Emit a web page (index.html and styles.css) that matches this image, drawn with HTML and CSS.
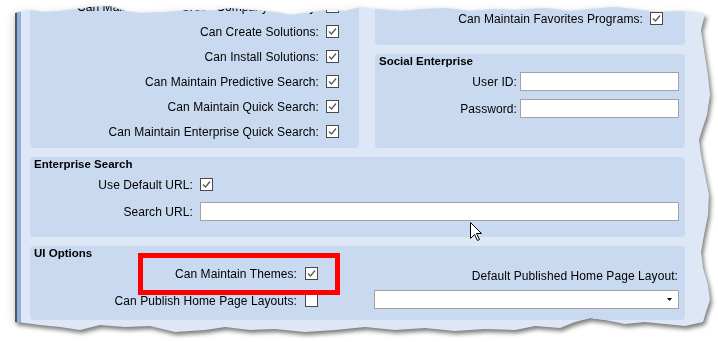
FILE: index.html
```html
<!DOCTYPE html>
<html lang="en">
  <head>
    <meta charset="UTF-8" />
    <meta name="viewport" content="width=device-width, initial-scale=1.0" />
    <title>User Options</title>
    <link rel="stylesheet" href="styles.css">
  </head>
  <body>
    <div class="stage">
      <div class="paper">
        <div class="sheet">
          <div class="top">
            <div class="panel perms">
              <div class="row">
                <span class="label">Can Maintain User Cross Company Security:</span>
                <svg class="check" viewBox="0 0 13 13"><rect x="0.5" y="0.5" width="12" height="12" /><path d="M3 6.5 L5.5 9 L10 3.5" /></svg>
              </div>
              <div class="row">
                <span class="label">Can Create Solutions:</span>
                <svg class="check" viewBox="0 0 13 13"><rect x="0.5" y="0.5" width="12" height="12" /><path d="M3 6.5 L5.5 9 L10 3.5" /></svg>
              </div>
              <div class="row">
                <span class="label">Can Install Solutions:</span>
                <svg class="check" viewBox="0 0 13 13"><rect x="0.5" y="0.5" width="12" height="12" /><path d="M3 6.5 L5.5 9 L10 3.5" /></svg>
              </div>
              <div class="row">
                <span class="label">Can Maintain Predictive Search:</span>
                <svg class="check" viewBox="0 0 13 13"><rect x="0.5" y="0.5" width="12" height="12" /><path d="M3 6.5 L5.5 9 L10 3.5" /></svg>
              </div>
              <div class="row">
                <span class="label">Can Maintain Quick Search:</span>
                <svg class="check" viewBox="0 0 13 13"><rect x="0.5" y="0.5" width="12" height="12" /><path d="M3 6.5 L5.5 9 L10 3.5" /></svg>
              </div>
              <div class="row">
                <span class="label">Can Maintain Enterprise Quick Search:</span>
                <svg class="check" viewBox="0 0 13 13"><rect x="0.5" y="0.5" width="12" height="12" /><path d="M3 6.5 L5.5 9 L10 3.5" /></svg>
              </div>
            </div>

            <div class="side">
              <div class="panel favs">
                <div class="row">
                  <span class="label">Can Maintain Favorites Programs:</span>
                  <svg class="check" viewBox="0 0 13 13"><rect x="0.5" y="0.5" width="12" height="12" /><path d="M3 6.5 L5.5 9 L10 3.5" /></svg>
                </div>
              </div>

              <div class="panel social">
                <h3>Social Enterprise</h3>
                <div class="field">
                  <span class="label">User ID:</span>
                  <input type="text" class="text" />
                </div>
                <div class="field">
                  <span class="label">Password:</span>
                  <input type="password" class="text" />
                </div>
              </div>
            </div>
          </div>

          <div class="panel search">
            <h3>Enterprise Search</h3>
            <div class="field">
              <span class="label">Use Default URL:</span>
              <svg class="check" viewBox="0 0 13 13"><rect x="0.5" y="0.5" width="12" height="12" /><path d="M3 6.5 L5.5 9 L10 3.5" /></svg>
            </div>
            <div class="field">
              <span class="label">Search URL:</span>
              <input type="text" class="text" />
            </div>
          </div>

          <div class="panel ui">
            <h3>UI Options</h3>
            <div class="ui-grid">
              <div class="ui-left">
                <div class="field">
                  <span class="label">Can Maintain Themes:</span>
                  <svg class="check" viewBox="0 0 13 13"><rect x="0.5" y="0.5" width="12" height="12" /><path d="M3 6.5 L5.5 9 L10 3.5" /></svg>
                </div>
                <div class="field">
                  <span class="label">Can Publish Home Page Layouts:</span>
                  <svg class="check off" viewBox="0 0 13 13"><rect x="0.5" y="0.5" width="12" height="12" /></svg>
                </div>
              </div>
              <div class="ui-right">
                <div class="layout-label">Default Published Home Page Layout:</div>
                <div class="dropdown">
                  <svg class="arrow" viewBox="0 0 5 3"><path d="M0 0 H5 L2.5 3 Z" /></svg>
                </div>
              </div>
            </div>
          </div>
        </div>
      </div>

      <div class="highlight"></div>
      <svg class="cursor" viewBox="0 0 12 19">
        <path d="M0.5 0.5 L0.5 16.5 L4.5 12.5 L7.5 18.5 L9.5 17.5 L6.5 11.5 L11.5 11.5 Z" />
      </svg>
    </div>
  </body>
</html>
```

FILE: styles.css
```css
body {
  margin: 0;
  background-color: #fff;
  font-family: "Liberation Sans", Arial, sans-serif;
  font-size: 12px;
  color: #000;
}
.stage {
  position: relative;
  width: 718px;
  height: 342px;
  overflow: hidden;
}
.paper {
  filter: drop-shadow(2px 3px 2px rgba(0, 0, 0, 0.5))
    drop-shadow(-4px 0 3px rgba(0, 0, 0, 0.08));
}
.sheet {
  margin-left: 15px;
  width: 697px;
  height: 338px;
  box-sizing: border-box;
  padding-left: 15px;
  display: flex;
  flex-direction: column;
  gap: 9px;
  overflow: hidden;
  background: linear-gradient(
    to right,
    #545454 0 2px,
    #8db0e2 2px 6px,
    #dde7f5 6px
  );
  clip-path: polygon(
    0px 13px, 8px 11px, 15px 10px, 28px 12px, 45px 11px, 60px 9px, 75px 7px,
    95px 6px, 110px 11px, 125px 13px, 150px 12px, 175px 10px, 195px 11px,
    215px 8px, 235px 10px, 260px 12px, 275px 15px, 290px 13px, 310px 10px,
    330px 11px, 345px 7px, 360px 9px, 385px 11px, 410px 9px, 430px 8px,
    455px 11px, 480px 9px, 500px 10px, 530px 8px, 555px 11px, 575px 9px,
    600px 7px, 625px 10px, 645px 12px, 665px 11px, 680px 12px, 690px 14px,
    686px 30px, 689px 50px, 693px 75px, 695px 95px, 692px 115px, 687px 130px,
    684px 140px, 686px 155px, 690px 175px, 694px 195px, 693px 215px,
    689px 235px, 686px 252px, 688px 268px, 693px 285px, 695px 300px,
    691px 312px, 688px 322px, 670px 326px, 650px 324px, 630px 322px,
    610px 324px, 590px 320px, 575px 318px, 560px 322px, 545px 328px,
    520px 326px, 500px 330px, 470px 329px, 440px 331px, 410px 328px,
    380px 330px, 350px 327px, 320px 330px, 290px 332px, 260px 329px,
    235px 330px, 210px 327px, 190px 330px, 160px 332px, 135px 326px,
    110px 327px, 85px 325px, 65px 330px, 45px 327px, 25px 325px,
    10px 323px, 0px 322px
  );
}
.top {
  margin-top: -35px;
  display: grid;
  grid-template-columns: 329px 310px;
  column-gap: 16px;
}
.side {
  display: flex;
  flex-direction: column;
  gap: 9px;
}
.panel {
  width: 655px;
  box-sizing: border-box;
  background-color: #c9daf0;
  border-radius: 4px;
}
.top .panel {
  width: auto;
}
.panel h3 {
  margin: 0;
  padding-left: 4px;
  font-size: 11.5px;
  font-weight: bold;
  line-height: 14px;
}
.label {
  letter-spacing: 0.08px;
  white-space: nowrap;
  line-height: 14px;
}
.row {
  height: 25px;
  display: flex;
  align-items: center;
  justify-content: flex-end;
  gap: 7px;
}
.check {
  width: 13px;
  height: 13px;
  display: block;
}
.check rect {
  fill: #fff;
  stroke: #4a4a4a;
}
.check path {
  fill: none;
  stroke: #5a5a5a;
  stroke-width: 1.3;
}
.text {
  height: 19px;
  box-sizing: border-box;
  margin: 0;
  padding: 0 2px;
  border: 1px solid #a3a3a3;
  background-color: #fff;
  font: inherit;
}

/* permission columns */
.perms {
  padding: 29px 20px 4px 0;
}
.favs {
  padding: 41px 22px 14px 0;
}

.field {
  height: 27px;
  display: grid;
  align-items: center;
  text-align: right;
}
.social {
  padding-bottom: 26px;
}
.social .field {
  grid-template-columns: 138px 159px;
  column-gap: 3px;
  padding-left: 4px;
}
.search {
  padding-bottom: 12px;
}
.search .field {
  grid-template-columns: 159px 1fr;
  column-gap: 7px;
  padding: 0 6px 0 4px;
}

/* UI options */
.ui {
  padding-bottom: 6px;
}
.ui-grid {
  display: grid;
  grid-template-columns: 340px 305px;
  padding-left: 4px;
}
.ui-left .field {
  grid-template-columns: 263px 13px;
  column-gap: 8px;
}
.layout-label {
  height: 27px;
  box-sizing: border-box;
  padding: 0 1px 4px 0;
  display: flex;
  align-items: flex-end;
  justify-content: flex-end;
  letter-spacing: 0.08px;
  line-height: 14px;
}
.dropdown {
  margin-top: 3px;
  height: 19px;
  box-sizing: border-box;
  border: 1px solid #a3a3a3;
  background-color: #fff;
  display: flex;
  align-items: center;
  justify-content: flex-end;
  padding-right: 6px;
}
.arrow {
  width: 5px;
  height: 3px;
  fill: #000;
}

/* annotation overlays */
.highlight {
  position: absolute;
  left: 138px;
  top: 253px;
  width: 202px;
  height: 42px;
  box-sizing: border-box;
  border: 5px solid #ff0000;
}
.cursor {
  position: absolute;
  left: 470px;
  top: 222px;
  width: 12px;
  height: 19px;
}
.cursor path {
  fill: #fff;
  stroke: #000;
  stroke-width: 1;
}
```
